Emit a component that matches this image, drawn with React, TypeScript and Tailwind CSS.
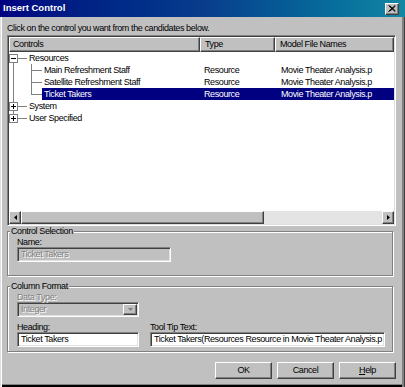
const raised =
  "border border-t-white border-l-white border-r-[#404040] border-b-[#404040] shadow-[inset_-1px_-1px_0_#808080]";
const sunken =
  "border border-t-[#808080] border-l-[#808080] border-r-white border-b-white shadow-[inset_1px_1px_0_#404040,inset_-1px_-1px_0_#dfdfdf]";

type RootProps = { first?: boolean; last?: boolean; open?: boolean };

// +/- box with the connector line, for the top level nodes
const RootLines = ({ first, last, open }: RootProps) => (
  <svg width="18" height="12" className="shrink-0">
    {!first && <line x1="4.5" y1="0" x2="4.5" y2="2" stroke="#808080" />}
    {!last && <line x1="4.5" y1="11" x2="4.5" y2="12" stroke="#808080" />}
    <rect x="0.5" y="2.5" width="8" height="8" fill="#fff" stroke="#808080" />
    <line x1="2" y1="6.5" x2="7" y2="6.5" stroke="#000" />
    {!open && <line x1="4.5" y1="4" x2="4.5" y2="9" stroke="#000" />}
    <line x1="9" y1="6.5" x2="18" y2="6.5" stroke="#808080" />
  </svg>
);

const ChildLines = ({ last }: { last?: boolean }) => (
  <svg width="33" height="12" className="shrink-0">
    <line x1="4.5" y1="0" x2="4.5" y2="12" stroke="#808080" />
    <line x1="22.5" y1="0" x2="22.5" y2={last ? 7 : 12} stroke="#808080" />
    <line x1="22.5" y1="6.5" x2="33" y2="6.5" stroke="#808080" />
  </svg>
);

const rows = [
  { name: "Main Refreshment Staff", last: false, selected: false },
  { name: "Satellite Refreshment Staff", last: false, selected: false },
  { name: "Ticket Takers", last: true, selected: true },
];

export default function App() {
  return (
    <div className="w-[405px] h-[387px] bg-[#c0c0c0] flex flex-col font-['Liberation_Sans',Arial,sans-serif] text-[9px] tracking-[-0.4px] text-black shadow-[inset_1px_0_0_#dfdfdf,inset_2px_0_0_#fff,inset_-1px_0_0_#404040,inset_-3px_0_0_#808080,inset_0_-2px_0_#000,inset_0_-3px_0_#808080]">
      {/* title bar */}
      <div className="h-[17px] flex items-center justify-between pl-[3px] pr-[6px] bg-gradient-to-r from-[#000080] via-[#0a3c8c] to-[#1287a3]">
        <span className="text-white font-bold text-[9.5px] tracking-normal">Insert Control</span>
        <button className={`w-[14px] h-[12px] bg-[#c0c0c0] flex items-center justify-center ${raised}`}>
          <svg width="8" height="7" viewBox="0 0 8 7">
            <path d="M0.5 0.5 L7 6.5 M1.5 0.5 L7.5 6 M7 0.5 L0.5 6.5 M7.5 1 L1.5 6.5" stroke="#000" />
          </svg>
        </button>
      </div>

      <div className="flex flex-col pl-[7px] pr-[9px]">
        <div className="h-[18px] pt-[6px] leading-[11px]">
          Click on the control you want from the candidates below.
        </div>

        {/* list view */}
        <div className={`h-[191px] bg-white flex flex-col p-[1px] ${sunken}`}>
          <div className="flex h-[15px] leading-[13px] bg-[#c0c0c0]">
            <div className={`w-[191px] pl-[3px] ${raised}`}>Controls</div>
            <div className={`w-[75px] pl-[4px] ${raised}`}>Type</div>
            <div className={`flex-1 pl-[4px] ${raised}`}>Model File Names</div>
          </div>

          <div className="flex-1 flex flex-col leading-[12px]">
            <div className="flex h-[12px]">
              <div className="w-[191px] flex">
                <RootLines first open />
                <span className="pl-[2px]">Resources</span>
              </div>
            </div>
            {rows.map((r) => (
              <div key={r.name} className={`flex h-[12px] ${r.selected ? "text-white" : ""}`}>
                <div className="w-[191px] flex">
                  <ChildLines last={r.last} />
                  <span className={`flex-1 pl-[2px] ${r.selected ? "bg-[#000080]" : ""}`}>{r.name}</span>
                </div>
                <div className={`w-[75px] pl-[4px] ${r.selected ? "bg-[#000080]" : ""}`}>Resource</div>
                <div className={`flex-1 pl-[6px] ${r.selected ? "bg-[#000080]" : ""}`}>Movie Theater Analysis.p</div>
              </div>
            ))}
            <div className="flex h-[12px]">
              <RootLines />
              <span className="pl-[2px]">System</span>
            </div>
            <div className="flex h-[12px]">
              <RootLines last />
              <span className="pl-[2px]">User Specified</span>
            </div>
          </div>

          {/* horizontal scroll bar */}
          <div className="h-[13px] flex bg-[#e4e4e4]">
            <div className={`w-[12px] bg-[#c0c0c0] flex items-center justify-center ${raised}`}>
              <svg width="3" height="5"><path d="M3 0 L0 2.5 L3 5 Z" fill="#000" /></svg>
            </div>
            <div className={`w-[243px] bg-[#c0c0c0] ${raised}`} />
            <div className="flex-1" />
            <div className={`w-[12px] bg-[#c0c0c0] flex items-center justify-center ${raised}`}>
              <svg width="3" height="5"><path d="M0 0 L3 2.5 L0 5 Z" fill="#000" /></svg>
            </div>
          </div>
        </div>

        {/* control selection */}
        <fieldset className="mr-[-6px] w-[386px] border border-[#808080] shadow-[inset_1px_1px_0_#fff,1px_1px_0_#fff]">
          <legend className="ml-[2px] px-[1px] leading-[11px] bg-[#c0c0c0]">Control Selection</legend>
          <div className="pl-[9px] pb-[13px]">
            <div className="leading-[10px]">Name:</div>
            <div className={`w-[154px] h-[15px] pl-[3px] leading-[13px] text-[#808080] [text-shadow:1px_1px_0_#fff] ${sunken}`}>
              Ticket Takers
            </div>
          </div>
        </fieldset>

        {/* column format */}
        <fieldset className="mt-[5px] w-[386px] border border-[#808080] shadow-[inset_1px_1px_0_#fff,1px_1px_0_#fff]">
          <legend className="ml-[2px] px-[1px] leading-[11px] bg-[#c0c0c0]">Column Format</legend>
          <div className="pl-[9px] pb-[4px]">
            <div className="leading-[10px] text-[#808080] [text-shadow:1px_1px_0_#fff]">Data Type:</div>
            <div className={`w-[122px] h-[15px] flex ${sunken}`}>
              <span className="flex-1 pl-[3px] leading-[13px] text-[#808080] [text-shadow:1px_1px_0_#fff]">Integer</span>
              <div className={`w-[14px] m-[1px] bg-[#c0c0c0] flex items-center justify-center ${raised}`}>
                <svg width="5" height="3"><path d="M0 0 L5 0 L2.5 3 Z" fill="#808080" /></svg>
              </div>
            </div>
            <div className="flex gap-[11px] mt-[5px]">
              <div className="w-[122px]">
                <div className="leading-[10px]">Heading:</div>
                <div className={`h-[15px] bg-white pl-[3px] leading-[13px] ${sunken}`}>Ticket Takers</div>
              </div>
              <div className="w-[235px]">
                <div className="leading-[10px]">Tool Tip Text:</div>
                <div className={`h-[15px] bg-white pl-[3px] leading-[13px] whitespace-nowrap overflow-hidden ${sunken}`}>
                  Ticket Takers(Resources Resource in Movie Theater Analysis.p
                </div>
              </div>
            </div>
          </div>
        </fieldset>

        {/* buttons */}
        <div className="flex justify-end gap-[5px] mt-[10px]">
          <button className={`w-[57px] h-[17px] bg-[#c0c0c0] ${raised}`}>OK</button>
          <button className={`w-[57px] h-[17px] bg-[#c0c0c0] ${raised}`}>Cancel</button>
          <button className={`w-[57px] h-[17px] bg-[#c0c0c0] ${raised}`}>
            <span className="underline">H</span>elp
          </button>
        </div>
      </div>
    </div>
  );
}
